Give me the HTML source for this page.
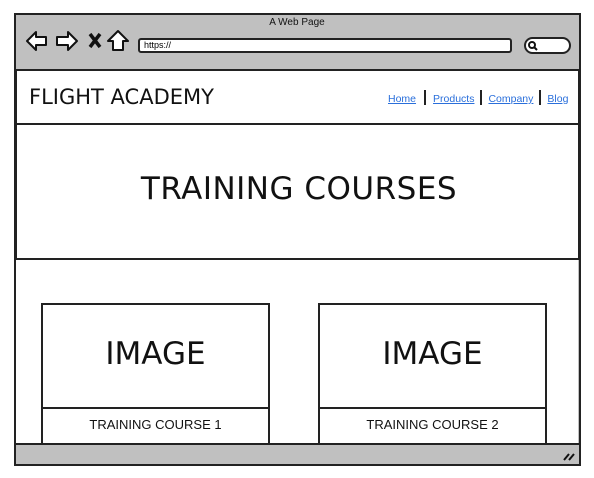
<!DOCTYPE html>
<html><head><style>
*{margin:0;padding:0;box-sizing:border-box}
body{width:594px;height:478px;background:#fff;position:relative;font-family:"Liberation Sans",sans-serif;overflow:hidden}
.a{position:absolute}
.b{border:2px solid #222}
.t{font-family:"DejaVu Sans","Liberation Sans",sans-serif;color:#111}
a{color:#2a6fdb;font-size:10.5px;text-decoration:underline}
</style></head><body>
<div class="a b" style="left:14px;top:13px;width:567px;height:453px;background:#c0c0c0"></div>
<div class="a" style="left:0;top:17px;width:594px;text-align:center;font-size:10px;color:#111">A Web Page</div>
<svg class="a" style="left:24px;top:28px" width="110" height="26" viewBox="0 0 110 26" fill="#fff" stroke="#111" stroke-width="2" stroke-linejoin="round">
<path d="M3 13 L12 4 L12 9 L22 9 L22 17 L12 17 L12 22 Z"/>
<path d="M53 13 L44 4 L44 9 L33 9 L33 17 L44 17 L44 22 Z"/>
<path d="M66 6 L76 19 M76 6 L66 19" stroke-width="3.5"/>
<path d="M84 13 L94 3 L104 13 L99 13 L99 22 L89 22 L89 13 Z"/>
</svg>
<div class="a b" style="left:138px;top:38px;width:374px;height:15px;background:#fff;border-radius:3px;font-size:9px;padding-left:4px;line-height:11px">https://</div>
<div class="a b" style="left:524px;top:37px;width:47px;height:17px;background:#fff;border-radius:9px"></div>
<svg class="a" style="left:527px;top:40px" width="12" height="12"><circle cx="5" cy="5" r="3" fill="none" stroke="#111" stroke-width="2"/><path d="M7 7 L10 10" stroke="#111" stroke-width="2"/></svg>
<div class="a b" style="left:15px;top:69px;width:565px;height:56px;background:#fff"></div>
<div class="a t" style="left:29px;top:85px;font-size:21px">FLIGHT ACADEMY</div>
<div class="a" style="left:388px;top:89px;white-space:nowrap"><a>Home</a><span style="display:inline-block;width:2px;height:15px;background:#222;margin:0 7px -3px 8px"></span><a>Products</a><span style="display:inline-block;width:2px;height:15px;background:#222;margin:0 6px -3px 6px"></span><a>Company</a><span style="display:inline-block;width:2px;height:15px;background:#222;margin:0 6px -3px 6px"></span><a>Blog</a></div>
<div class="a b" style="left:15px;top:123px;width:565px;height:137px;background:#fff"></div>
<div class="a t" style="left:0;top:171px;width:598px;text-align:center;font-size:31px;letter-spacing:0.5px">TRAINING COURSES</div>
<div class="a" style="left:16px;top:260px;width:562px;height:183px;background:#fff"></div>
<div class="a b" style="left:41px;top:303px;width:229px;height:106px;background:#fff"></div>
<div class="a b" style="left:41px;top:407px;width:229px;height:38px;background:#fff"></div>
<div class="a t" style="left:41px;top:336px;width:229px;text-align:center;font-size:31px">IMAGE</div>
<div class="a" style="left:41px;top:417px;width:229px;text-align:center;font-size:13px;color:#111">TRAINING COURSE 1</div>
<div class="a b" style="left:318px;top:303px;width:229px;height:106px;background:#fff"></div>
<div class="a b" style="left:318px;top:407px;width:229px;height:38px;background:#fff"></div>
<div class="a t" style="left:318px;top:336px;width:229px;text-align:center;font-size:31px">IMAGE</div>
<div class="a" style="left:318px;top:417px;width:229px;text-align:center;font-size:13px;color:#111">TRAINING COURSE 2</div>
<div class="a" style="left:15px;top:443px;width:565px;height:2px;background:#222"></div>
<svg class="a" style="left:562px;top:450px" width="14" height="12"><path d="M2 10 L7 4 M7 10 L12 4" stroke="#111" stroke-width="2"/></svg>
</body></html>
